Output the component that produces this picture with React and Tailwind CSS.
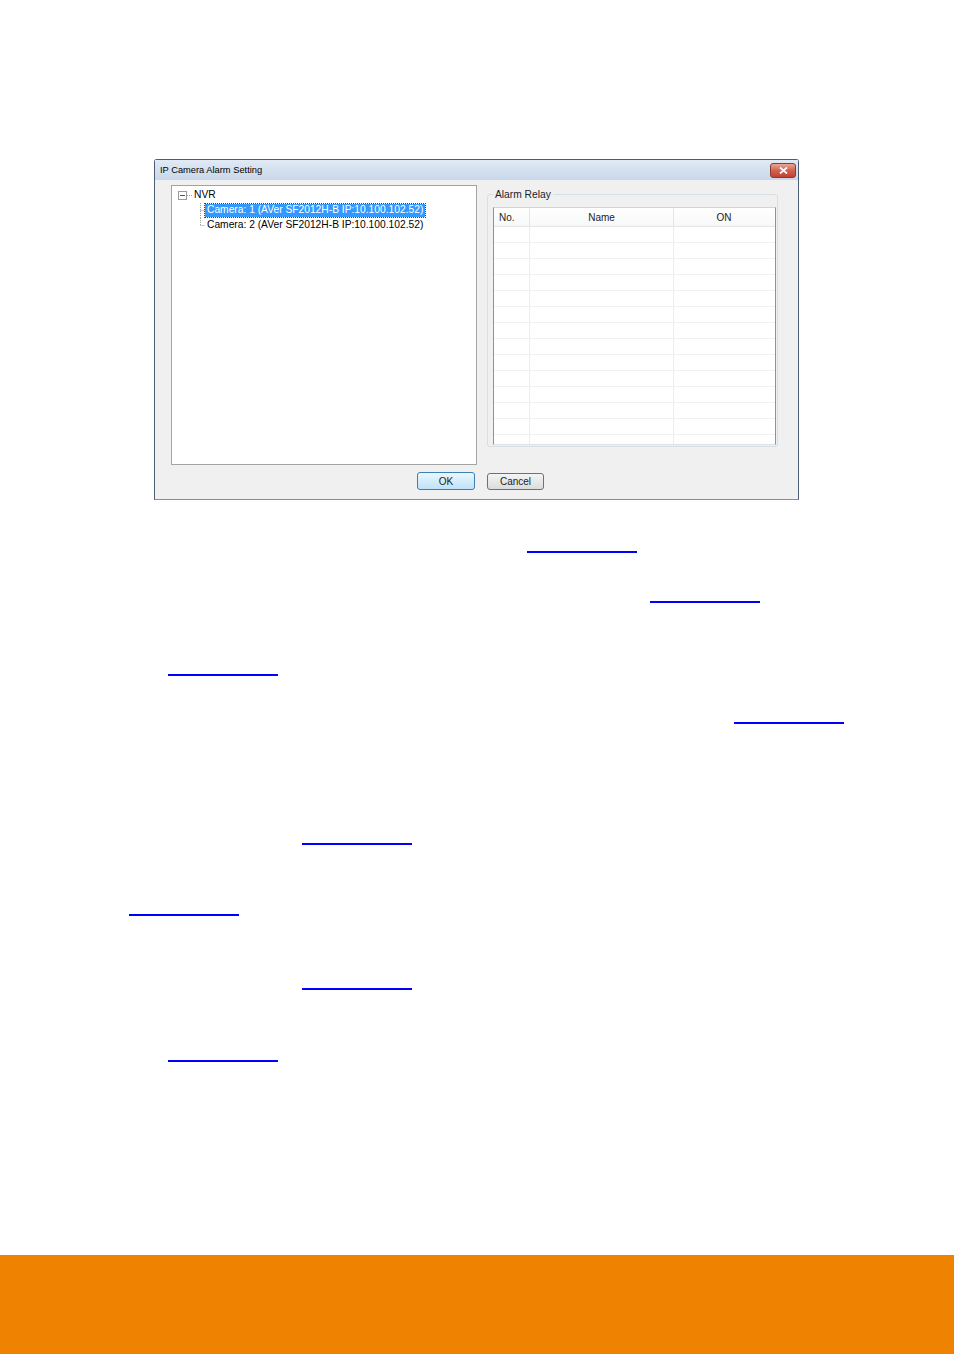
import React from 'react';

const font = { fontFamily: '"Liberation Sans", Arial, sans-serif' };

const links = [
    { mt: 'mt-[51px]', ml: 'ml-[527px]' },
    { mt: 'mt-[48px]', ml: 'ml-[650px]' },
    { mt: 'mt-[71px]', ml: 'ml-[168px]' },
    { mt: 'mt-[46px]', ml: 'ml-[734px]' },
    { mt: 'mt-[119px]', ml: 'ml-[302px]' },
    { mt: 'mt-[69px]', ml: 'ml-[129px]' },
    { mt: 'mt-[72px]', ml: 'ml-[302px]' },
    { mt: 'mt-[70px]', ml: 'ml-[168px]' },
];

const rows = Array.from({ length: 14 });

const Connector = ({ last }) => (
    <svg width="6" height="15" className="shrink-0">
        <line x1="1.5" y1="0" x2="1.5" y2={last ? 7.5 : 15} stroke="#a0a0a0" strokeDasharray="1 1" />
        <line x1="1.5" y1="7.5" x2="6" y2="7.5" stroke="#a0a0a0" strokeDasharray="1 1" />
    </svg>
);

const Tree = () => (
    <div className="w-[306px] h-[280px] bg-white border border-[#a3a3a3] pt-[2px] text-[10.25px] text-black">
        <div className="flex items-center h-[15px] pl-[6px]">
            <div className="w-[9px] h-[9px] border border-[#9a9a9a] bg-white flex items-center justify-center">
                <div className="w-[5px] h-px bg-[#555]" />
            </div>
            <svg width="6" height="15" className="shrink-0">
                <line x1="0" y1="7.5" x2="6" y2="7.5" stroke="#a0a0a0" strokeDasharray="1 1" />
            </svg>
            <span className="ml-[1px] leading-none">NVR</span>
        </div>
        <div className="flex items-center h-[15px] pl-[27px]">
            <Connector />
            <span className="h-[13px] flex items-center bg-[#3399ff] text-white px-[2px] outline-1 outline-dotted outline-[#1a4d80] leading-none whitespace-nowrap">
                Camera: 1 (AVer SF2012H-B IP:10.100.102.52)
            </span>
        </div>
        <div className="flex items-center h-[15px] pl-[27px]">
            <Connector last />
            <span className="px-[2px] leading-none whitespace-nowrap">Camera: 2 (AVer SF2012H-B IP:10.100.102.52)</span>
        </div>
    </div>
);

const AlarmRelay = () => (
    <div className="relative mt-[9px] ml-[10px] w-[291px] h-[253px] border border-[#d5dfe5] rounded-[3px] pt-[12px] pl-[5px]">
        <span className="absolute -top-[7px] left-[5px] bg-[#f0f0f0] px-[2px] text-[10.25px] leading-[13px] text-[#222]">
            Alarm Relay
        </span>
        <div className="w-[283px] h-[238px] bg-white border border-[#8e9399] border-t-[#d0d4d8] border-b-[#dfe2e5] overflow-hidden text-[10px] text-[#222]">
            <div className="flex h-[19px] border-b border-[#e5e5e5] bg-gradient-to-b from-white to-[#f7f8f9]">
                <div className="w-[36px] border-r border-[#e5e5e5] pl-[5px] flex items-center">No.</div>
                <div className="w-[144px] border-r border-[#e5e5e5] flex items-center justify-center">Name</div>
                <div className="w-[100px] flex items-center justify-center">ON</div>
            </div>
            {rows.map((_, i) => (
                <div key={i} className="flex h-[16px] border-b border-[#f1f1f1]">
                    <div className="w-[36px] border-r border-[#ececec]" />
                    <div className="w-[144px] border-r border-[#ececec]" />
                    <div className="w-[100px]" />
                </div>
            ))}
        </div>
    </div>
);

const Dialog = () => (
    <div className="ml-[154px] w-[645px] h-[341px] flex flex-col border border-[#4c5e74] border-b-[#6e94ba] rounded-t-[3px] bg-[#f0f0f0]" style={font}>
        <div className="h-[20px] flex items-center justify-between bg-gradient-to-b from-[#e1eaf5] to-[#c8d7ea] pl-[5px] pr-[2px]">
            <span className="text-[9.3px] text-black mt-[1px]">IP Camera Alarm Setting</span>
            <div className="w-[26px] h-[15px] rounded-[3px] border border-[#8a3b30] bg-gradient-to-b from-[#e8a796] via-[#d2614f] to-[#c2402f] flex items-center justify-center">
                <svg width="9" height="7" viewBox="0 0 9 7">
                    <path d="M1 0.5 L8 6.5 M8 0.5 L1 6.5" stroke="white" strokeWidth="1.8" />
                </svg>
            </div>
        </div>
        <div className="flex pt-[5px] pl-[16px]">
            <Tree />
            <AlarmRelay />
        </div>
        <div className="flex mt-[7px] pl-[262px] gap-[12px] text-[10px] text-[#222]">
            <button className="w-[58px] h-[18px] rounded-[3px] border border-[#3c7fb1] bg-gradient-to-b from-[#eaf6fd] to-[#bee3f8] flex items-center justify-center">
                OK
            </button>
            <button className="mt-[1px] w-[57px] h-[17px] rounded-[3px] border border-[#707070] bg-gradient-to-b from-[#f4f4f4] to-[#dcdcdc] flex items-center justify-center">
                Cancel
            </button>
        </div>
    </div>
);

const App = () => {
    return (
        <div className="min-h-[1354px] w-[954px] bg-white flex flex-col pt-[159px]">
            <Dialog />
            {links.map((l, i) => (
                <div key={i} className={`${l.mt} ${l.ml} w-[110px] h-[2px] bg-[#0000ff]`} />
            ))}
            <div className="mt-auto h-[99px] bg-[#ef8200]" />
        </div>
    );
};

export default App;
